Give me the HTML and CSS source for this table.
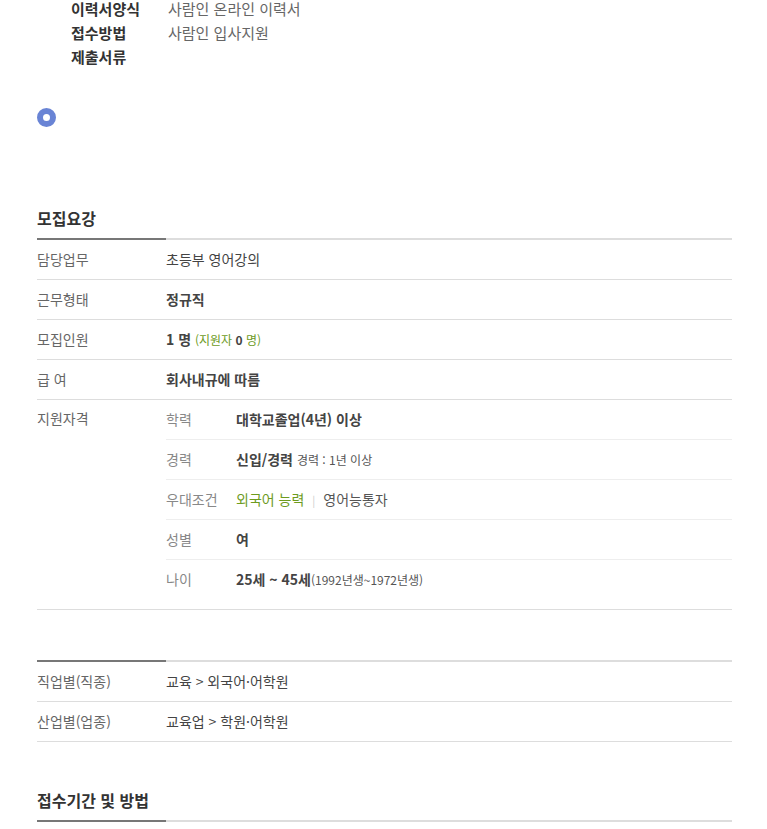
FILE: index.html
```html
<!DOCTYPE html>
<html lang="ko">
<head>
    <meta charset="UTF-8">
    <meta name="viewport" content="width=device-width, initial-scale=1.0">
    <title>채용공고</title>
    <link rel="stylesheet" href="styles.css">
</head>
<body>
    <div class="wrap">
        <dl class="info">
            <div class="info-row"><dt>이력서양식</dt><dd>사람인 온라인 이력서</dd></div>
            <div class="info-row"><dt>접수방법</dt><dd>사람인 입사지원</dd></div>
            <div class="info-row"><dt>제출서류</dt><dd></dd></div>
        </dl>

        <span class="dot"></span>

        <h2 class="title">모집요강</h2>
        <div class="rule"></div>
        <div class="row">
            <div class="th">담당업무</div>
            <div class="td">초등부 영어강의</div>
        </div>
        <div class="row">
            <div class="th">근무형태</div>
            <div class="td"><b>정규직</b></div>
        </div>
        <div class="row">
            <div class="th">모집인원</div>
            <div class="td"><b>1 명</b> <span class="green small">(지원자 <b class="dark">0</b> 명)</span></div>
        </div>
        <div class="row">
            <div class="th">급 여</div>
            <div class="td"><b>회사내규에 따름</b></div>
        </div>
        <div class="row row-qual">
            <div class="th th-top">지원자격</div>
            <div class="sub">
                <div class="sub-row"><span class="sub-th">학력</span><span><b>대학교졸업(4년) 이상</b></span></div>
                <div class="sub-row"><span class="sub-th">경력</span><span><b>신입/경력</b> <span class="small">경력 : 1년 이상</span></span></div>
                <div class="sub-row"><span class="sub-th">우대조건</span><span><span class="green">외국어 능력</span><span class="bar">|</span>영어능통자</span></div>
                <div class="sub-row"><span class="sub-th">성별</span><span><b>여</b></span></div>
                <div class="sub-row"><span class="sub-th">나이</span><span><b>25세 ~ 45세</b><span class="small">(1992년생~1972년생)</span></span></div>
            </div>
        </div>

        <div class="rule rule-gap"></div>
        <div class="row">
            <div class="th">직업별(직종)</div>
            <div class="td">교육 &gt; 외국어·어학원</div>
        </div>
        <div class="row">
            <div class="th">산업별(업종)</div>
            <div class="td">교육업 &gt; 학원·어학원</div>
        </div>

        <h2 class="title title-next">접수기간 및 방법</h2>
        <div class="rule"></div>
    </div>
</body>
</html>
```

FILE: styles.css
```css
body {
    margin: 0;
    font-family: "Noto Sans CJK KR", "Noto Sans", sans-serif;
    color: #333;
    background: #fff;
}
.wrap {
    width: 695px;
    margin-left: 37px;
}
.info {
    display: flex;
    flex-direction: column;
    gap: 6px;
    margin: 0 0 0 34px;
    font-size: 15px;
    line-height: 18px;
}
.info-row {
    display: flex;
}
.info dt {
    width: 97px;
    font-weight: bold;
    color: #333;
}
.info dd {
    margin: 0;
    color: #666;
}
.dot {
    display: block;
    width: 19px;
    height: 19px;
    margin-top: 42px;
    box-sizing: border-box;
    border: 6px solid #6984d5;
    border-radius: 50%;
}
.title {
    margin: 81px 0 0;
    padding-bottom: 10px;
    font-size: 16px;
    line-height: 20px;
    font-weight: bold;
    color: #333;
}
.title-next {
    margin-top: 48px;
}
.rule {
    height: 2px;
    background: linear-gradient(to right, #777 129px, #ddd 129px);
}
.rule-gap {
    margin-top: 50px;
}
.row {
    display: grid;
    grid-template-columns: 129px 1fr;
    align-items: center;
    height: 37px;
    padding-bottom: 2px;
    border-bottom: 1px solid #ddd;
    font-size: 14px;
}
.th {
    color: #666;
}
.td {
    color: #444;
}
b {
    color: #444;
}
.small {
    font-size: 12px;
}
.green {
    color: #6d9b1e;
}
.green b.dark {
    color: #444;
}
.row-qual {
    height: auto;
    align-items: start;
    padding-bottom: 10px;
}
.th-top {
    line-height: 37px;
}
.sub-row {
    display: grid;
    grid-template-columns: 70px 1fr;
    align-items: center;
    height: 37px;
    padding-bottom: 2px;
    border-bottom: 1px solid #eee;
    color: #555;
}
.sub-row:last-child {
    border-bottom: none;
}
.sub-th {
    color: #888;
}
.bar {
    color: #ccc;
    font-size: 11px;
    margin: 0 8px;
}
```
